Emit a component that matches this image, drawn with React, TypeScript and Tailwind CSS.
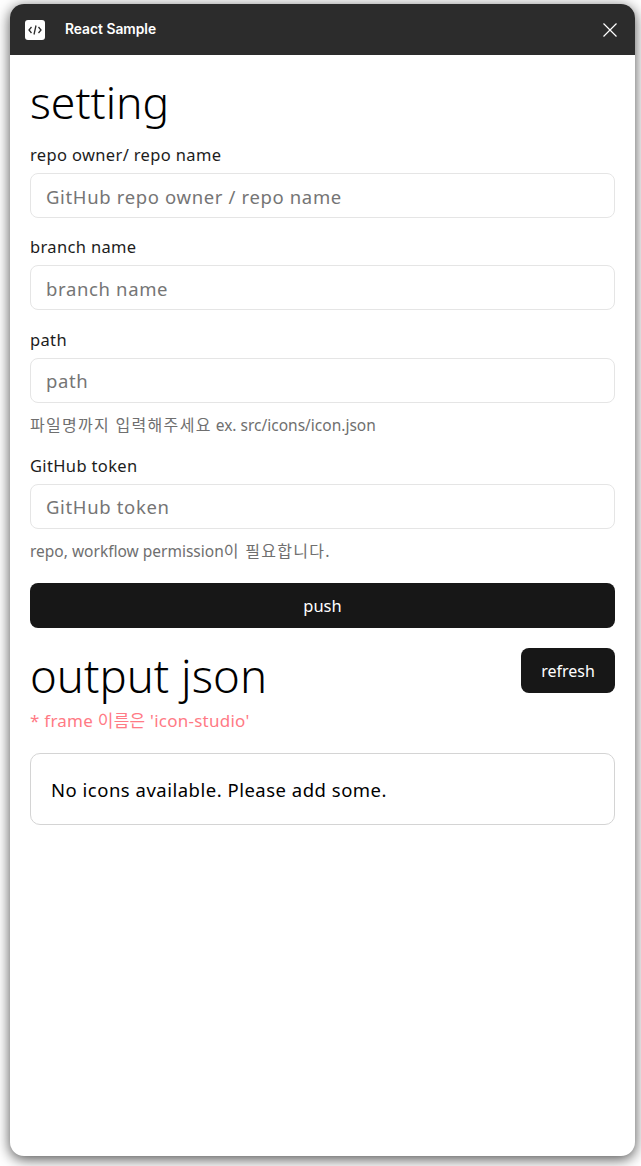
const fontStack = { fontFamily: '"Noto Sans", "Noto Sans CJK KR", sans-serif' };

function Ko({ children }: { children: string }) {
  return <span className="text-[16px] tracking-[1.3px]">{children}</span>;
}

function Field({ label, placeholder, hint }: { label: string; placeholder: string; hint?: React.ReactNode }) {
  return (
    <div className="flex flex-col">
      <label className="text-[16.5px] leading-[22px] tracking-[0.35px] text-[#1c1c1c]">{label}</label>
      <input
        placeholder={placeholder}
        className="mt-[7px] h-[45px] w-full rounded-lg border border-[#e5e5e5] bg-white px-[15px] pt-[1px] text-[18.5px] tracking-[0.64px] text-black outline-none placeholder:text-[#757575]"
      />
      {hint && <p className="mt-[11.5px] text-[15.5px] leading-[22px] text-[#6f6f6f]">{hint}</p>}
    </div>
  );
}

export default function App() {
  return (
    <div className="h-[1166px] w-[641px] overflow-hidden bg-white pl-[10px] pt-[4px]" style={fontStack}>
      <div className="flex h-[1152px] w-[625px] flex-col overflow-hidden rounded-[14px] bg-white shadow-[0_3px_14px_rgba(0,0,0,0.7)]">
        {/* Title bar */}
        <header className="flex h-[51px] shrink-0 items-center bg-[#2c2c2c] pl-[15px] pr-[17px]">
          <div className="flex h-5 w-5 items-center justify-center rounded-[3px] bg-white">
            <svg width="14" height="10" viewBox="0 0 14 10" fill="none" stroke="#2c2c2c" strokeWidth="1.3">
              <path d="M3.5 2 1 5l2.5 3M10.5 2 13 5l-2.5 3M8 .5 6 9.5" />
            </svg>
          </div>
          <span className="ml-5 text-[13.8px] font-semibold text-white" style={{ fontFamily: 'Inter, sans-serif' }}>
            React Sample
          </span>
          <svg className="ml-auto" width="16" height="16" viewBox="0 0 16 16" stroke="white" strokeWidth="1.2">
            <path d="M1.5 1.5 14.5 14.5M14.5 1.5 1.5 14.5" />
          </svg>
        </header>

        <main className="flex flex-col px-5">
          <h1 className="mt-[17px] text-[44.5px] leading-[60px] font-light text-black">setting</h1>
          <div className="mt-[12px] flex flex-col gap-[18.4px]">
            <Field label="repo owner/ repo name" placeholder="GitHub repo owner / repo name" />
            <Field label="branch name" placeholder="branch name" />
            <Field
              label="path"
              placeholder="path"
              hint={<><Ko>파일명까지 입력해주세요</Ko> ex. src/icons/icon.json</>}
            />
            <Field
              label="GitHub token"
              placeholder="GitHub token"
              hint={<>repo, workflow permission<Ko>이 필요합니다.</Ko></>}
            />
          </div>
          <button className="mt-[21px] h-[45px] w-full rounded-lg bg-[#171717] pt-[2px] text-[16.5px] text-white">push</button>

          <div className="mt-5 flex items-start justify-between">
            <h2 className="mt-[-3px] text-[45.5px] leading-[60px] font-light text-black">output json</h2>
            <button className="h-[45px] w-[94px] rounded-lg bg-[#171717] text-[16px] text-white">refresh</button>
          </div>
          <p className="mt-[4px] text-[17px] leading-[24px] tracking-[0.25px] text-[#ff7a85]">* frame 이름은 'icon-studio'</p>
          <div className="mt-5 flex h-[72px] items-center rounded-[10px] border border-[#d4d4d4] px-5 pt-[1px] text-[18.5px] tracking-[0.5px] text-black">
            No icons available. Please add some.
          </div>
        </main>
      </div>
    </div>
  );
}
